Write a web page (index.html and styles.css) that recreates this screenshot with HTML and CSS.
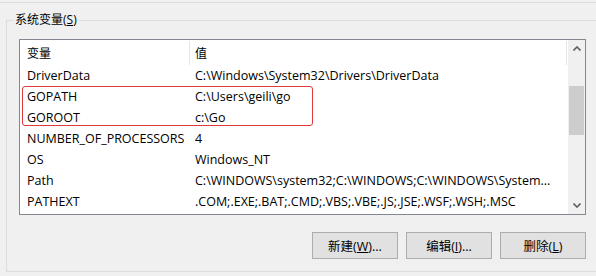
FILE: index.html
```html
<!DOCTYPE html>
<html>
  <head>
    <title>系统变量</title>
    <link rel="stylesheet" href="styles.css">
  </head>
  <body>
    <div class="top-rule"></div>

    <fieldset class="group">
      <legend>系统变量(<u>S</u>)</legend>

      <div class="list">
        <div class="list-body">
          <div class="row header">
            <div class="cell">变量</div>
            <div class="cell">值</div>
          </div>

          <div class="row">
            <div class="cell">DriverData</div>
            <div class="cell">C:\Windows\System32\Drivers\DriverData</div>
          </div>

          <div class="highlight">
            <div class="row">
              <div class="cell">GOPATH</div>
              <div class="cell">C:\Users\geili\go</div>
            </div>
            <div class="row">
              <div class="cell">GOROOT</div>
              <div class="cell">c:\Go</div>
            </div>
          </div>

          <div class="row">
            <div class="cell">NUMBER_OF_PROCESSORS</div>
            <div class="cell">4</div>
          </div>
          <div class="row">
            <div class="cell">OS</div>
            <div class="cell">Windows_NT</div>
          </div>
          <div class="row">
            <div class="cell">Path</div>
            <div class="cell">C:\WINDOWS\system32;C:\WINDOWS;C:\WINDOWS\System...</div>
          </div>
          <div class="row">
            <div class="cell">PATHEXT</div>
            <div class="cell">.COM;.EXE;.BAT;.CMD;.VBS;.VBE;.JS;.JSE;.WSF;.WSH;.MSC</div>
          </div>
        </div>

        <div class="scrollbar">
          <div class="arrow">
            <svg width="8" height="5" viewBox="0 0 8 5"><path d="M0.5 4.5 L4 1 L7.5 4.5" fill="none" stroke="#606060" stroke-width="1.6"/></svg>
          </div>
          <div class="track">
            <div class="thumb"></div>
          </div>
          <div class="arrow">
            <svg width="8" height="5" viewBox="0 0 8 5"><path d="M0.5 0.5 L4 4 L7.5 0.5" fill="none" stroke="#606060" stroke-width="1.6"/></svg>
          </div>
        </div>
      </div>

      <div class="actions">
        <button>新建(<u>W</u>)...</button>
        <button>编辑(<u>I</u>)...</button>
        <button>删除(<u>L</u>)</button>
      </div>
    </fieldset>
  </body>
</html>
```

FILE: styles.css
```css
html,
body {
  margin: 0;
  padding: 0;
}

body {
  width: 596px;
  height: 276px;
  overflow: hidden;
  background: #f0f0f0;
  color: #000;
  font-family: "Open Sans", "Noto Sans CJK SC", sans-serif;
  font-size: 12px;
}

.top-rule {
  height: 2px;
  border-bottom: 1px solid #dcdcdc;
}

.group {
  margin: 9px -20px 0 6px;
  padding: 0 0 12px 12px;
  border: 1px solid #dcdcdc;
  min-width: 0;
}

.group legend {
  margin-left: -6px;
  padding: 0 2px;
  line-height: 16px;
}

.list {
  display: flex;
  box-sizing: border-box;
  width: 567px;
  height: 176px;
  margin-top: 11px;
  border: 1px solid #828790;
  background: #fff;
}

.list-body {
  flex: 1;
  overflow: hidden;
  font-size: 12.5px;
}

.row {
  display: grid;
  grid-template-columns: 170px 377px;
  height: 21px;
  align-items: center;
}

.cell {
  white-space: nowrap;
  overflow: hidden;
}

.cell:first-child {
  padding-left: 7px;
}

.cell:last-child {
  padding: 0 6px 0 5px;
}

.row.header {
  height: 25px;
  align-items: stretch;
  font-size: 12px;
}

.row.header .cell {
  display: flex;
  align-items: center;
  border-right: 1px solid #e5e5e5;
  margin: 1px 0 0;
}

.highlight {
  position: relative;
}

.highlight::after {
  content: "";
  position: absolute;
  top: 0;
  left: 2px;
  width: 291px;
  height: 40px;
  box-sizing: border-box;
  border: 1px solid #e0393e;
  border-radius: 3px;
}

.scrollbar {
  display: flex;
  flex-direction: column;
  width: 17px;
  background: #f0f0f0;
}

.arrow {
  display: flex;
  align-items: center;
  justify-content: center;
  height: 17px;
}

.track {
  flex: 1;
}

.thumb {
  height: 49px;
  margin: 29px 1px 0;
  background: #cdcdcd;
}

.actions {
  display: flex;
  justify-content: flex-end;
  gap: 8px;
  width: 567px;
  margin-top: 17px;
}

.actions button {
  box-sizing: border-box;
  width: 86px;
  height: 27px;
  padding: 0;
  border: 1px solid #adadad;
  background: #e1e1e1;
  color: #000;
  font: inherit;
  font-size: 12.5px;
}
```
